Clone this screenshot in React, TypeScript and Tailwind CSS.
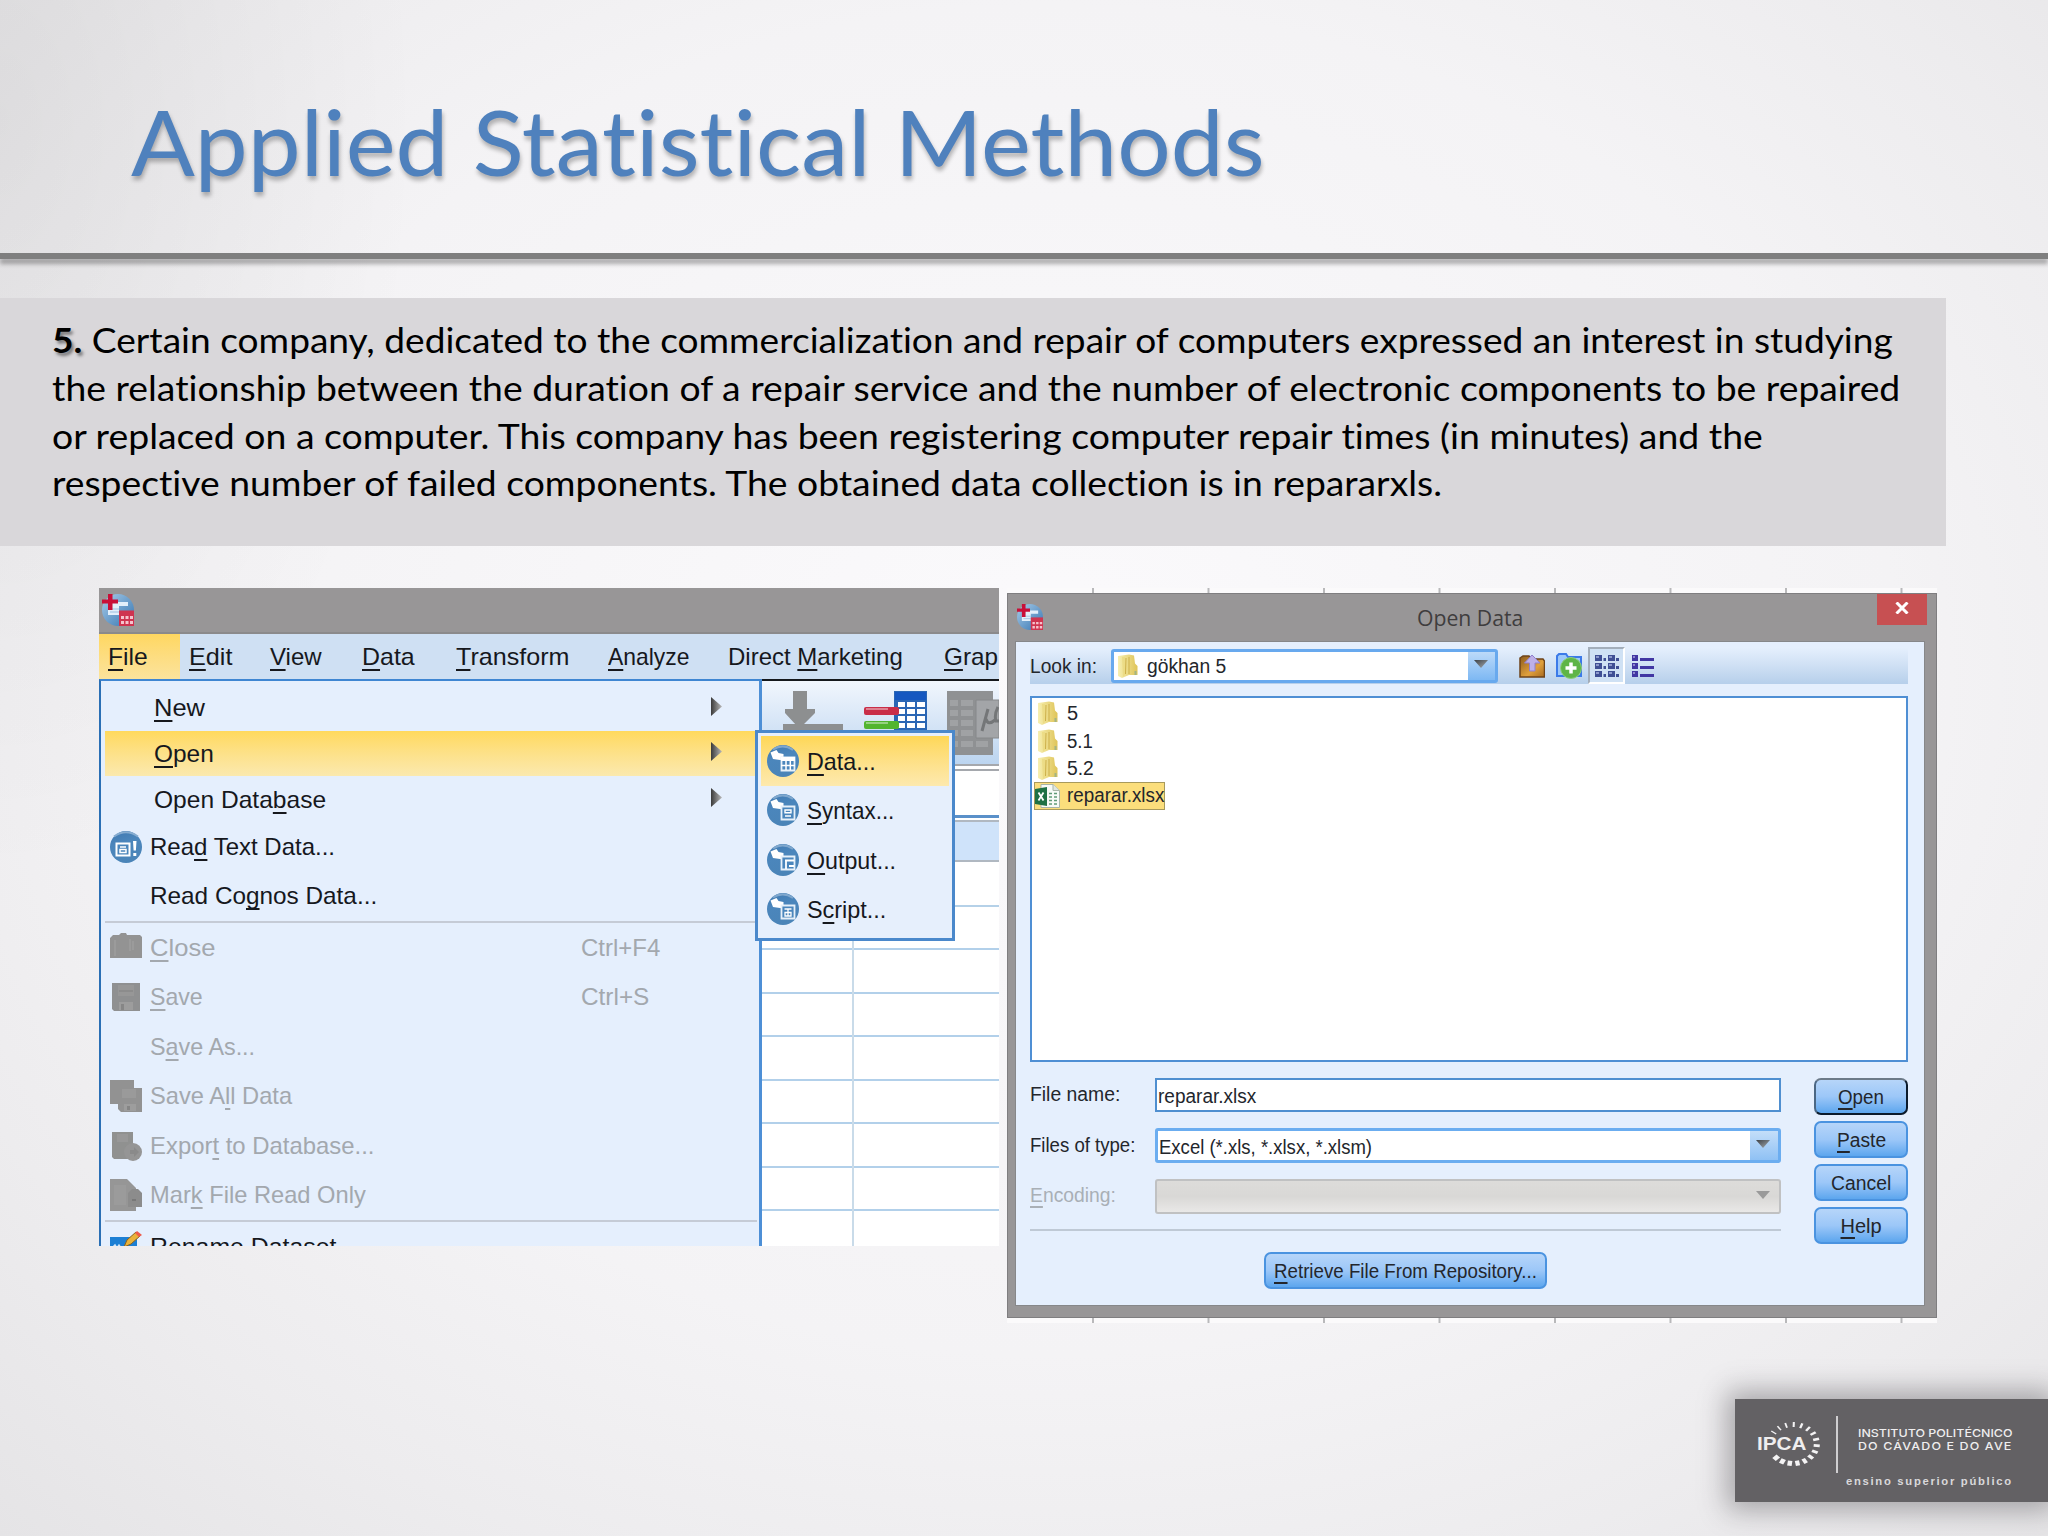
import { useLayoutEffect, useRef, useState } from "react";
import type { ReactNode } from "react";

// Single line of text squeezed or stretched to an exact width
function Fit({ w, className = "", children }: { w: number; className?: string; children: ReactNode }) {
  const ref = useRef<HTMLSpanElement>(null);
  const [scale, setScale] = useState(1);
  useLayoutEffect(() => {
    if (ref.current) setScale(w / ref.current.offsetWidth);
  }, [w]);
  return (
    <span className={`block shrink-0 whitespace-pre ${className}`} style={{ width: w }}>
      <span ref={ref} className="inline-block origin-left align-top" style={{ transform: `scaleX(${scale})` }}>
        {children}
      </span>
    </span>
  );
}

// "&File" -> F is underlined
function Mnemonic({ text }: { text: string }) {
  const i = text.indexOf("&");
  if (i < 0) return <>{text}</>;
  return (
    <>
      {text.slice(0, i)}
      <span className="underline decoration-2 underline-offset-[4px] [text-decoration-skip-ink:none]">{text[i + 1]}</span>
      {text.slice(i + 2)}
    </>
  );
}

function Defs() {
  return (
    <svg className="absolute size-0">
      <defs>
        <linearGradient id="ball" x1="0" y1="0" x2="0.3" y2="1">
          <stop offset="0" stopColor="#3f78b0" />
          <stop offset="0.45" stopColor="#4b86bc" />
          <stop offset="1" stopColor="#4a84b8" />
        </linearGradient>
        <linearGradient id="appball" x1="0" y1="0" x2="1" y2="1">
          <stop offset="0" stopColor="#a9cdea" />
          <stop offset="1" stopColor="#3574b0" />
        </linearGradient>
        <linearGradient id="folder" x1="0" y1="0" x2="1" y2="0">
          <stop offset="0" stopColor="#f7efb0" />
          <stop offset="1" stopColor="#dfc458" />
        </linearGradient>
        <linearGradient id="box" x1="0" y1="0" x2="1" y2="1">
          <stop offset="0" stopColor="#8b5a1c" />
          <stop offset="0.6" stopColor="#e0a03c" />
          <stop offset="1" stopColor="#a86a20" />
        </linearGradient>
        <linearGradient id="tri" x1="0" y1="0" x2="1" y2="0">
          <stop offset="0" stopColor="#3a3a3a" />
          <stop offset="1" stopColor="#b9b9b9" />
        </linearGradient>
        <linearGradient id="tridown" x1="0" y1="0" x2="1" y2="1">
          <stop offset="0" stopColor="#3d4247" />
          <stop offset="1" stopColor="#a5abb0" />
        </linearGradient>
      </defs>
    </svg>
  );
}

function AppIcon({ className }: { className: string }) {
  return (
    <svg viewBox="0 0 32 32" className={className}>
      <circle cx="16" cy="16" r="16" fill="url(#appball)" />
      <path d="M10 8h16v4h-9v9H6v-8h4z" fill="#e3effa" />
      <path d="M8 15h9M8 18h9" stroke="#9dbfe0" strokeWidth="1" />
      <path d="M6 0h4.500v5.500H16v4h-5.500V16H6V9.500H0v-4h6z" fill="#c90f38" />
      <path d="M17 16.500h15V32H17z" fill="#cf3450" />
      <path d="M19 22h3v3h-3zm4.500 0h3v3h-3zm4.500 0h3v3h-3zm-9 5h3v3h-3zm4.500 0h3v3h-3zm4.500 0h3v3h-3z" fill="#f6c3cd" />
    </svg>
  );
}

function ReadTextIcon() {
  return (
    <svg viewBox="0 0 32 32" className="size-8">
      <circle cx="16" cy="16" r="16" fill="url(#ball)" />
      <path d="M4 5.500Q16-3 28 5.500" stroke="#86acd0" strokeWidth="2" fill="none" />
      <path d="M6.500 12.500h13v12h-13z" stroke="#fff" strokeWidth="2" fill="none" />
      <path d="M10 16h6M10 18.500h6v3h-6z" stroke="#fff" strokeWidth="1.500" fill="none" />
      <path d="M23 10h3.500l-.6 9.500h-2.300zM23.300 22h3v3h-3z" fill="#fff" />
    </svg>
  );
}

function OpenIcon({ kind }: { kind: string }) {
  return (
    <svg viewBox="0 0 32 32" className="size-8 shrink-0">
      <circle cx="16" cy="16" r="16" fill="url(#ball)" />
      <path d="M6 4.500Q16-2 26 5" stroke="#7fa7cd" strokeWidth="2" fill="none" />
      <path d="M3.500 7.500l6-2.500 2 3 5 1v6.500L6 14z" fill="#fff" />
      <path d="M14.500 12.500h13v13h-13z" fill="#4b86bc" stroke="#e6f0f9" strokeWidth="1.800" />
      {kind === "data" && (
        <>
          <path d="M14 12h14v4H14z" fill="#fff" />
          <path d="M14 20.500h14M19 16v9M23.300 16v9" stroke="#fff" strokeWidth="1.500" />
        </>
      )}
      {kind === "syntax" && <path d="M18 16h6v2.800h-6zM18 22h6" stroke="#fff" strokeWidth="1.400" fill="none" />}
      {kind === "output" && (
        <>
          <path d="M16 14h5v3h-5z" fill="#4b86bc" />
          <path d="M18 16.500h9M19 17v8M22 22h5" stroke="#fff" strokeWidth="1.800" />
        </>
      )}
      {kind === "script" && <path d="M17.500 16h7M21 16v7M18 19.500h6v3.500h-6z" stroke="#fff" strokeWidth="1.300" fill="none" />}
    </svg>
  );
}

function DisabledIcon({ kind }: { kind: string }) {
  const shapes: Record<string, ReactNode> = {
    close: (
      <>
        <path d="M0 6l3-3h6l2-2h5l1 2h13l2 2v21H0z" fill="#939393" />
        <path d="M5 8v16M20 7v12M23 9v9" stroke="#9b9b9b" strokeWidth="2" fill="none" />
      </>
    ),
    save: (
      <>
        <path d="M2 2h28v28H4l-2-2z" fill="#8f9091" />
        <path d="M8 4h16v11H8z" fill="#979797" />
        <path d="M9 10h14" stroke="#888" strokeWidth="1.500" />
        <path d="M9 21h14v8H9z" fill="#9d9d9d" />
        <path d="M11 23h3v6h-3z" fill="#868686" />
      </>
    ),
    saveall: (
      <>
        <path d="M0 0h24v8h8v24H11l-3-3v-5H0z" fill="#929292" />
        <path d="M12 9h14v9H12z" fill="#9a9a9a" />
        <path d="M14 24h12v7H14z" fill="#9d9d9d" />
        <path d="M17 26h3v4h-3z" fill="#858585" />
      </>
    ),
    export: (
      <>
        <path d="M2 2h21v27H4l-2-2z" fill="#909190" />
        <path d="M7 4h11v8H7z" fill="#989898" />
        <circle cx="23" cy="22" r="9" fill="#959595" />
        <path d="M20 20h4v-3l5 5-5 5v-3h-4z" fill="#8a8a8a" />
      </>
    ),
    mark: (
      <>
        <path d="M0 0h17l9 9v23H0z" fill="#969696" />
        <path d="M4 6h12v20H4z" fill="#9b9b9b" />
        <path d="M18 14l4-4h6l4 4v14H18z" fill="#8c8c8c" />
        <path d="M22 20h4v2h-4z" fill="#787878" />
      </>
    ),
  };
  return (
    <svg viewBox="0 0 32 32" className="size-8">
      {shapes[kind]}
    </svg>
  );
}

function RenameIcon() {
  return (
    <svg viewBox="0 0 32 32" className="size-8">
      <path d="M0 6h27v22H0z" fill="#1c7fd4" />
      <path d="M3 16l2-2 2 3 2-3 2 3" stroke="#cfe6fa" strokeWidth="1.500" fill="none" />
      <path d="M14 16l3-7 9-8 4 4-9 8z" fill="#e9b23a" stroke="#8a6420" strokeWidth="1" />
      <path d="M25 2l2-2 5 4-3 2z" fill="#ee5a4a" />
    </svg>
  );
}

function FolderIcon() {
  return (
    <svg viewBox="0 0 21 24" className="h-6 w-[21px] shrink-0">
      <path d="M1 2l11-1.500 5 1 1 8 2.500 2.500v9H12L5 24l-4-2z" fill="url(#folder)" />
      <path d="M8 3l1 17-3 3-1-20z" fill="#ecdc86" />
      <path d="M9 4l-.5 16M12 3v17" stroke="#cdb04a" strokeWidth="1" />
      <path d="M17.500 17h2v4h-2z" fill="#a4b583" />
    </svg>
  );
}

function ExcelIcon() {
  return (
    <svg viewBox="0 0 26 24" className="h-6 w-[26px] shrink-0">
      <path d="M6 .5h12l6.500 6V23.500H6z" fill="#f7faf7" stroke="#a7b5a7" />
      <path d="M18 .5v6h6.500" fill="#dfe6df" stroke="#a7b5a7" />
      <path d="M14 9.500h3M19 9.500h3M14 13h3M19 13h3M14 16.500h3M19 16.500h3M14 20h3M19 20h3" stroke="#5f9a77" strokeWidth="1.500" />
      <path d="M0 5l12-2v19L0 20z" fill="#1e7145" />
      <path d="M3.500 8.500l5 8M8.500 8.500l-5 8" stroke="#fff" strokeWidth="1.800" />
    </svg>
  );
}

function DownTri({ muted = false }: { muted?: boolean }) {
  return (
    <svg viewBox="0 0 14 8" className="h-2 w-3.5">
      <path d="M0 0h14L7 8z" fill={muted ? "#9a9a9a" : "url(#tridown)"} />
    </svg>
  );
}

const menus = [
  { text: "&Edit", w: 43, className: "ml-[9px]" },
  { text: "&View", w: 52, className: "ml-[38px]" },
  { text: "&Data", w: 53, className: "ml-10" },
  { text: "&Transform", w: 113, className: "ml-[41px]" },
  { text: "&Analyze", w: 81, className: "ml-[39px]" },
  { text: "Direct &Marketing", w: 175, className: "ml-[39px]" },
  { text: "&Graphs", w: 80, className: "ml-[41px]" },
];

const fileItems = [
  { text: "&New", w: 51, row: "h-[50px] pt-1 pl-[49px]", arrow: true },
  { text: "&Open", w: 60, row: "h-[45px] pl-[49px] bg-gradient-to-b from-[#ffd95c] to-[#fbe9ae]", arrow: true },
  { text: "Open Data&base", w: 172, row: "h-[47px] pl-[49px]", arrow: true },
  { text: "Rea&d Text Data...", w: 185, row: "h-12", icon: <ReadTextIcon /> },
  { text: "Read Co&gnos Data...", w: 227, row: "h-[50px]" },
  "sep",
  { text: "&Close", w: 65, row: "h-[49px]", muted: true, icon: <DisabledIcon kind="close" />, keys: "Ctrl+F4", kw: 79 },
  { text: "&Save", w: 53, row: "h-[50px]", muted: true, icon: <DisabledIcon kind="save" />, keys: "Ctrl+S", kw: 68 },
  { text: "S&ave As...", w: 105, row: "h-[49px]", muted: true },
  { text: "Save A&ll Data", w: 142, row: "h-[50px]", muted: true, icon: <DisabledIcon kind="saveall" /> },
  { text: "Expor&t to Database...", w: 224, row: "h-[49px]", muted: true, icon: <DisabledIcon kind="export" /> },
  { text: "Mar&k File Read Only", w: 216, row: "h-[50px]", muted: true, icon: <DisabledIcon kind="mark" /> },
  "sep",
  { text: "Rename Dataset...", w: 207, row: "h-[49px]", icon: <RenameIcon /> },
] as const;

function FileMenu() {
  return (
    <div className="h-[567px] w-[663px] shrink-0 overflow-hidden border-t-2 border-r-[3px] border-l-2 border-t-[#3f86d2] border-r-[#4d8fd6] border-l-[#2a6fb5] bg-[#e5effd] pr-0.5 pl-1 text-[24px] leading-6">
      {fileItems.map((item, i) => {
        if (item === "sep") return <div key={i} className="h-0.5 bg-[#c5cbd6]" />;
        const it = item as any;
        return (
          <div key={i} className={`flex items-center ${it.row} ${it.muted ? "text-[#a3a8ae]" : "text-[#16181d]"}`}>
            {!it.arrow && <span className="mr-2 ml-[5px] w-8 shrink-0">{it.icon}</span>}
            <Fit w={it.w}>
              <Mnemonic text={it.text} />
            </Fit>
            {it.keys && (
              <span className="flex grow justify-end">
                <span className="w-[176px]">
                  <Fit w={it.kw}>{it.keys}</Fit>
                </span>
              </span>
            )}
            {it.arrow && (
              <svg viewBox="0 0 11 19" className="mr-[35px] mb-1 ml-auto h-[19px] w-[11px]">
                <path d="M0 0l11 9.500L0 19z" fill="url(#tri)" />
              </svg>
            )}
          </div>
        );
      })}
    </div>
  );
}

function OpenSubmenu() {
  const items = [
    { text: "&Data...", w: 69, kind: "data" },
    { text: "&Syntax...", w: 87, kind: "syntax" },
    { text: "&Output...", w: 89, kind: "output" },
    { text: "S&cript...", w: 79, kind: "script" },
  ];
  return (
    <div className="absolute top-[142px] left-[656px] h-[211px] w-[200px] border-[3px] border-[#4a88cb] bg-[#e6effc] px-[3px] pt-[3px] text-[24px] leading-6 text-[#16181d]">
      {items.map((it) => (
        <div
          key={it.text}
          className={
            it.kind === "data"
              ? "flex h-[49.500px] items-center bg-gradient-to-b from-[#fed755] to-[#fde9ae] pl-1.5"
              : "flex h-[49.500px] items-center pl-1.5"
          }
        >
          <OpenIcon kind={it.kind} />
          <Fit w={it.w} className="mt-0.5 ml-2">
            <Mnemonic text={it.text} />
          </Fit>
        </div>
      ))}
    </div>
  );
}

// Toolbar and data grid seen to the right of the open menu
function Sheet() {
  return (
    <div className="flex grow flex-col bg-white">
      <div className="h-0.5 bg-[#15181c]" />
      <div className="flex h-[83px] items-start bg-gradient-to-b from-[#f1f6fd] to-[#bcd5f0] pt-2.5 pl-[21px]">
        <svg viewBox="0 0 60 42" className="h-[42px] w-[60px] shrink-0">
          <path d="M10 0h14v18h8v4L20 34h-7L2 22v-4h8z" fill="#8d8f90" />
          <path d="M0 33h60v8H0z" fill="#8d8f90" />
        </svg>
        <svg viewBox="0 0 64 42" className="ml-[21px] h-[42px] w-16 shrink-0">
          <path d="M30 0h33v42H30z" fill="#2a66b4" />
          <path d="M31 1h31v8H31z" fill="#1557c0" />
          <path d="M34 11h7v5h-7zm9 0h8v5h-8zm10 0h8v5h-8zm-19 7h7v5h-7zm9 0h8v5h-8zm10 0h8v5h-8zm-19 7h7v5h-7zm9 0h8v5h-8zm10 0h8v5h-8zm-19 7h7v5h-7zm9 0h8v5h-8zm10 0h8v5h-8z" fill="#fff" />
          <rect y="16" width="35" height="8" rx="2" fill="#c92e48" />
          <rect y="30" width="35" height="8" rx="2" fill="#52b52f" />
          <path d="M2 18h22M2 32h22" stroke="#fff" strokeOpacity=".4" strokeWidth="2" />
        </svg>
        <svg viewBox="0 0 52 64" className="ml-[19px] h-16 w-[52px] shrink-0">
          <path d="M0 0h46v64H0z" fill="#8f9193" />
          <path d="M3 9h8v6H3zm11 0h12v6H14zM3 19h8v6H3zm11 0h12v6H14zM3 29h8v6H3zm11 0h12v6H14zM3 39h8v6H3zm11 0h12v6H14zm15 11h12v6H29zM3 50h8v6H3zm11 0h12v6H14z" fill="#a0a2a4" />
          <path d="M29 9h23v38H29z" fill="#a3a5a8" stroke="#86888a" />
          <path d="M35 40l6-22M39 28q2 7 9 1M51 16q-4 8-2 14h3" stroke="#747678" strokeWidth="3" fill="none" />
        </svg>
      </div>
      <div className="h-[7px] border-y-2 border-[#a5a8ad]" />
      <div className="h-[47px] border-b-[3px] border-[#5a90c9]" />
      <div className="mt-0.5 h-[42px] border-y-2 border-[#b0b8c1] bg-[#cfe3fa]" />
      <div className="h-[45px] border-b-2 border-[#b5d1e8]" />
      <div className="flex grow">
        <div className="w-[92px] border-r-2 border-[#c9dbe9] bg-[repeating-linear-gradient(to_bottom,#fff_0px,#fff_41.500px,#b2d0ea_41.500px,#b2d0ea_43.500px)]" />
        <div className="grow bg-[repeating-linear-gradient(to_bottom,#fff_0px,#fff_41.500px,#b2d0ea_41.500px,#b2d0ea_43.500px)]" />
      </div>
    </div>
  );
}

function SpssWindow() {
  return (
    <div className="relative h-[658px] w-[900px] shrink-0 overflow-hidden bg-white">
      <div className="flex h-[46px] items-start border-b-2 border-[#8b8a8b] bg-[#989697] pt-1.5 pl-[3px]">
        <AppIcon className="size-8" />
      </div>
      <div className="flex h-[45px] items-center bg-[#cfe0f3] text-[24px] leading-6 text-[#16181d]">
        <div className="flex h-full w-[81px] shrink-0 items-center bg-gradient-to-b from-[#ffd760] to-[#fbe39c] pl-[9px]">
          <Fit w={40}>
            <Mnemonic text="&File" />
          </Fit>
        </div>
        {menus.map((m) => (
          <Fit key={m.text} w={m.w} className={m.className}>
            <Mnemonic text={m.text} />
          </Fit>
        ))}
      </div>
      <div className="flex h-[567px]">
        <FileMenu />
        <Sheet />
      </div>
      <OpenSubmenu />
    </div>
  );
}

function DialogButton({ text, w, className = "" }: { text: string; w: number; className?: string }) {
  return (
    <button
      className={`flex h-[37px] items-center justify-center rounded-[7px] border-2 bg-gradient-to-b from-[#b6d5f9] via-[#9cc7f8] to-[#5ca6ee] ${className}`}
    >
      <Fit w={w}>
        <Mnemonic text={text} />
      </Fit>
    </button>
  );
}

function LookInBar() {
  return (
    <div className="flex h-[37px] items-center bg-gradient-to-b from-[#e6f0fd] via-[#cfe0f4] to-[#b6cfeb]">
      <Fit w={67} className="mr-[14px]">
        Look in:
      </Fit>
      <div className="flex h-[34px] w-[387px] items-center rounded-[3px] border-[3px] border-[#68a9ee] bg-white pl-[3px]">
        <FolderIcon />
        <Fit w={79} className="ml-[9px]">
          gökhan 5
        </Fit>
        <span className="ml-auto flex h-full w-[27px] justify-center bg-gradient-to-b from-[#bcdaf9] to-[#7db8f3] pt-2 pr-0.5">
          <DownTri />
        </span>
      </div>
      <svg viewBox="0 0 26 24" className="ml-[21px] h-6 w-[26px]">
        <path d="M1 4l3-2h6l2 3h12l1.500 2v16H1z" fill="url(#box)" stroke="#6d431a" strokeWidth="1.500" />
        <path d="M13 1l8 8h-5v8h-5.500V9H5.500z" fill="#bdb0e8" stroke="#8f7fce" />
      </svg>
      <svg viewBox="0 0 26 26" className="ml-[11px] size-[26px]">
        <path d="M1 3l2-2h7l2 3h13v19H1z" fill="#9cc8fa" stroke="#3c7ae8" strokeWidth="2" />
        <circle cx="15" cy="15" r="10.500" fill="#5fb547" stroke="#8fce7c" />
        <path d="M15 9.500v11M9.500 15h11" stroke="#fff" strokeWidth="3.500" />
      </svg>
      <div className="ml-1.5 flex h-[37px] w-[37px] items-center justify-center border-2 border-t-[#a3aebb] border-r-white border-b-white border-l-[#a3aebb] bg-[#cfe1f4]">
        <svg viewBox="0 0 24 24" className="size-6">
          <path d="M0 1h7v6H0zm13 0h7v6h-7zM0 9h7v6H0zm13 0h7v6h-7zM0 17h7v6H0zm13 0h7v6h-7z" fill="#3f4f94" />
          <path d="M8.500 4h2.500v3H8.500zm12.500 0h3v3h-3zM8.500 12h2.500v3H8.500zM21 12h3v3h-3zM8.500 20h2.500v3H8.500zM21 20h3v3h-3z" fill="#3f4f94" />
          <path d="M1 2h3v2H1zm13 0h3v2h-3zM1 10h3v2H1zm13 0h3v2h-3zM1 18h3v2H1zm13 0h3v2h-3z" fill="#8b98cb" />
        </svg>
      </div>
      <svg viewBox="0 0 22 24" className="ml-[7px] h-6 w-[22px]">
        <path d="M0 1h6v6H0zM0 9h6v6H0zM0 17h6v6H0zM8 4h14v3H8zM8 12h14v3H8zM8 20h14v3H8z" fill="#4237a3" />
        <path d="M1 2h2v2H1zM1 10h2v2H1zM1 18h2v2H1z" fill="#8f88cf" />
      </svg>
    </div>
  );
}

function FileList() {
  const folders = [
    { name: "5", w: 11 },
    { name: "5.1", w: 26 },
    { name: "5.2", w: 27 },
  ];
  return (
    <div className="mt-3 h-[366px] border-2 border-[#4f8fd4] bg-white pt-px pl-0.5">
      {folders.map((f) => (
        <div key={f.name} className="flex h-[27.800px] items-center pl-[3px]">
          <FolderIcon />
          <Fit w={f.w} className="ml-[9px]">
            {f.name}
          </Fit>
        </div>
      ))}
      <div className="flex h-[28px] w-[131px] items-center border border-[#a89a5c] bg-[#fbde7c]">
        <ExcelIcon />
        <Fit w={97} className="mb-0.5 ml-1.5">
          reparar.xlsx
        </Fit>
      </div>
    </div>
  );
}

// Column borders of the sheet peeking out behind the dialog
function Ticks() {
  return (
    <div className="h-[5px] bg-[#fbfafb] bg-[linear-gradient(to_right,#b9b9bb_0px,#b9b9bb_2px,transparent_2px)] bg-[length:115.500px_5px] bg-[position:85px_0]" />
  );
}

function OpenDialog() {
  return (
    <div className="w-[930px] shrink-0 bg-white">
      <Ticks />
      <div className="h-[725px] border border-[#7f7e80] bg-[#989697]">
        <div className="flex h-[47px] items-start">
          <AppIcon className="mt-2.5 ml-[9px] size-[26px]" />
          <Fit w={106} className="mt-[11px] ml-[374px] font-['Open_Sans',sans-serif] text-[22px] leading-6 text-[#3f3d3e]">
            Open Data
          </Fit>
          <div className="ml-auto mr-[9px] flex h-[31px] w-[50px] items-center justify-center bg-[#c75052] pb-1">
            <svg viewBox="0 0 14 12" className="h-3 w-3.5">
              <path d="M1.500 0.500l11 11M12.500 0.500l-11 11" stroke="#fff" strokeWidth="3" />
            </svg>
          </div>
        </div>
        <div className="mr-[11px] ml-[7px] h-[665px] border border-[#868789] bg-[#e5effd] pt-[5px] pr-4 pl-[14px] text-[20px] leading-5 text-[#23262c]">
          <LookInBar />
          <FileList />
          <div className="mt-4 flex justify-between">
            <div className="w-[751px]">
              <div className="flex">
                <Fit w={90} className="mt-1.5">
                  File name:
                </Fit>
                <div className="ml-auto flex h-[34px] w-[626px] items-center border-2 border-[#4f8fd0] bg-white pl-px">
                  <Fit w={98} className="mt-0.5">
                    reparar.xlsx
                  </Fit>
                </div>
              </div>
              <div className="mt-4 flex">
                <Fit w={105} className="mt-[7px]">
                  Files of type:
                </Fit>
                <div className="ml-auto flex h-[35px] w-[626px] items-center rounded-[3px] border-[3px] border-[#6badf0] bg-white pl-px">
                  <Fit w={213} className="mt-0.5">
                    Excel (*.xls, *.xlsx, *.xlsm)
                  </Fit>
                  <span className="ml-auto flex h-full w-7 justify-center bg-gradient-to-b from-[#c4def9] to-[#8fc1f4] pt-[9px] pr-0.5">
                    <DownTri />
                  </span>
                </div>
              </div>
              <div className="mt-4 flex">
                <Fit w={86} className="mt-1.5 text-[#a9afb6]">
                  <Mnemonic text="&Encoding:" />
                </Fit>
                <div className="ml-auto flex h-[35px] w-[626px] justify-end rounded-[3px] border-2 border-[#c0c1c2] bg-gradient-to-b from-[#dddcda] via-[#d9d8d6] to-[#e9e8e7] pt-2.5 pr-[9px]">
                  <DownTri muted />
                </div>
              </div>
              <div className="mt-[15px] h-0.5 bg-[#bfc9d5]" />
              <DialogButton text="&Retrieve File From Repository..." w={263} className="mt-[21px] ml-[234px] w-[283px] border-[#4a93e0]" />
            </div>
            <div className="flex w-[94px] flex-col gap-1.5">
              <DialogButton text="&Open" w={46} className="border-t-[#6c7a88] border-r-[#0c1b2c] border-b-[#0c1b2c] border-l-[#4b6784]" />
              <DialogButton text="&Paste" w={49} className="border-[#4a93e0]" />
              <DialogButton text="Cancel" w={60} className="border-[#4a93e0]" />
              <DialogButton text="&Help" w={41} className="border-[#4a93e0]" />
            </div>
          </div>
        </div>
      </div>
      <Ticks />
    </div>
  );
}

// Dashes get thicker clockwise around the ring
const dashes = Array.from({ length: 16 }, (_, i) => ({ angle: -54 + i * 18.6, t: 1.1 + i * 0.2 }));

function Logo() {
  return (
    <div className="ml-auto flex h-[103px] w-[313px] bg-[#636164] pl-[22px] font-['Liberation_Sans',sans-serif] text-[#efeeef] shadow-[0_0_26px_8px_rgba(60,58,62,0.4)]">
      <div className="relative w-[79px]">
        <svg viewBox="0 0 79 103" className="h-[103px] w-[79px]">
          {dashes.map((d) => (
            <path key={d.angle} d="M0-17V-22" stroke="#f4f3f4" strokeWidth={d.t} transform={`translate(36 45) scale(1.22 1) rotate(${d.angle})`} />
          ))}
        </svg>
        <Fit w={49} className="absolute top-[36px] left-0 text-[19px] leading-[18px] font-bold">
          IPCA
        </Fit>
      </div>
      <div className="mt-[17px] h-[57px] w-0.5 bg-[#cfced0]" />
      <div className="pl-2">
        <Fit w={155} className="mt-7 ml-3 font-['Inter',sans-serif] text-[11px] leading-[13px] font-medium">
          INSTITUTO POLITÉCNICO
        </Fit>
        <Fit w={155} className="ml-3 font-['Inter',sans-serif] text-[11px] leading-[13px] font-medium tracking-[1px]">
          DO CÁVADO E DO AVE
        </Fit>
        <Fit w={167} className="mt-[22px] text-[10px] leading-[13px] font-bold tracking-[1.500px] text-[#d9d8da]">
          ensino superior público
        </Fit>
      </div>
    </div>
  );
}

export default function App() {
  return (
    <div className="h-[1536px] w-[2048px] overflow-hidden bg-[#f5f4f6] bg-[radial-gradient(ellipse_420px_760px_at_0px_120px,rgba(0,0,0,0.06)_0%,rgba(0,0,0,0)_100%),radial-gradient(ellipse_1700px_1350px_at_1050px_680px,#fbfafc_0%,#f4f3f5_50%,#edecee_70%,#e0dfe1_100%)] font-['Liberation_Sans',Arial,sans-serif]">
      <Defs />
      <header className="flex h-[253px] items-start">
        <Fit w={1134} className="mt-[86px] ml-[131px] font-['Lato',sans-serif] text-[91px] leading-[110px] text-[#4f81bd] [font-variant-ligatures:none] [text-shadow:1px_4px_4px_rgba(0,0,0,0.28)]">
          Applied Statistical Methods
        </Fit>
      </header>
      <div className="h-1.5 bg-[#7f7f7f] shadow-[0_5px_4px_rgba(0,0,0,0.3)]" />

      <section className="mt-[39px] h-[248px] w-[1946px] bg-[#d9d7da] pt-[18px] pl-[51.500px] font-['Lato',sans-serif] text-[34px] leading-[47.800px] text-black [font-variant-ligatures:none]">
        <Fit w={1841}>
          <b className="[text-shadow:2px_3px_3px_rgba(0,0,0,0.45)]">5.</b> Certain company, dedicated to the commercialization and repair of computers expressed an interest in studying
        </Fit>
        <Fit w={1848}>the relationship between the duration of a repair service and the number of electronic components to be repaired</Fit>
        <Fit w={1711}>or replaced on a computer. This company has been registering computer repair times (in minutes) and the</Fit>
        <Fit w={1390}>respective number of failed components. The obtained data collection is in repararxls.</Fit>
      </section>

      <main className="mt-[42px] ml-[99px] flex h-[735px] items-start gap-2">
        <SpssWindow />
        <OpenDialog />
      </main>
      <footer className="mt-[76px]">
        <Logo />
      </footer>
    </div>
  );
}
